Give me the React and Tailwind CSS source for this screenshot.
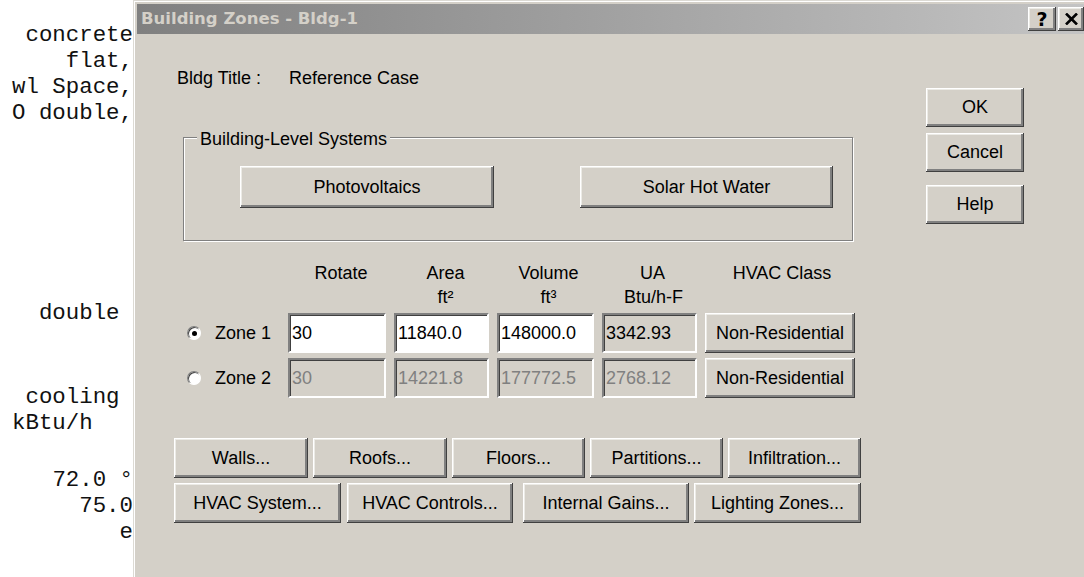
import React from 'react';

// Classic raised 3D button face
const Btn = ({ className = '', children }) => (
    <button
        type="button"
        className={`flex items-center justify-center bg-[#d4d0c8] text-black shadow-[inset_-1px_-1px_0_#404040,inset_1px_1px_0_#ffffff,inset_-3px_-3px_0_#808080,inset_2px_2px_0_#ecebe6] ${className}`}
    >
        {children}
    </button>
);

// Sunken edit box; disabled ones keep the dialog face colour
const Field = ({ value, white, dim }) => (
    <div
        className={`flex h-[40px] items-center border-2 border-t-[#808080] border-l-[#808080] border-r-white border-b-white pl-[2px] shadow-[inset_1px_1px_0_#404040] ${white ? 'bg-white' : 'bg-[#d4d0c8]'} ${dim ? 'text-[#808080]' : 'text-black'}`}
    >
        {value}
    </div>
);

const Radio = ({ checked }) => (
    <span className="flex h-[14px] w-[14px] items-center justify-center rounded-full border border-t-[#808080] border-l-[#808080] border-r-white border-b-white bg-white shadow-[inset_1px_1px_0_#404040]">
        {checked && <span className="h-[5px] w-[5px] rounded-full bg-black" />}
    </span>
);

const cols = 'grid grid-cols-[93px_98px_95px_97px_95px_150px] gap-x-[8px]';

const zones = [
    { name: 'Zone 1', rotate: '30', area: '11840.0', volume: '148000.0', ua: '3342.93', active: true },
    { name: 'Zone 2', rotate: '30', area: '14221.8', volume: '177772.5', ua: '2768.12', active: false },
];

export default function App() {
    return (
        <div className="flex h-[577px] w-[1084px] overflow-hidden bg-white font-['Liberation_Sans',Arial,sans-serif] text-[18px] text-black">
            {/* Report text behind the dialog */}
            <div className="w-[133px] shrink-0 overflow-hidden whitespace-pre text-right font-['Liberation_Mono','Courier_New',monospace] text-[22.4px] leading-[26px] text-[#111]">
                <div className="mt-[22px]">concrete</div>
                <div>flat,</div>
                <div>wl Space,</div>
                <div>O double,</div>
                <div className="mt-[174px]">double </div>
                <div className="mt-[58px]">cooling </div>
                <div>kBtu/h   </div>
                <div className="mt-[31px]">72.0 °</div>
                <div>75.0</div>
                <div>e</div>
            </div>

            {/* Dialog window */}
            <div className="flex flex-1 flex-col bg-[#d4d0c8] pl-[4px] pt-[4px] shadow-[inset_1px_1px_0_#dcdad4,inset_2px_2px_0_#ffffff]">
                <div className="flex h-[30px] items-center justify-between bg-linear-to-r from-[#808080] to-[#c4c4c4] pl-[4px]">
                    <span className="font-['DejaVu_Sans',sans-serif] text-[16.5px] font-bold text-[#d4d0c8]">
                        Building Zones - Bldg-1
                    </span>
                    <div className="flex gap-[2px]">
                        <Btn className="h-[24px] w-[28px] font-['DejaVu_Sans',sans-serif] text-[19px] font-bold">?</Btn>
                        <Btn className="h-[24px] w-[26px]">
                            <svg width="13" height="12" viewBox="0 0 13 12">
                                <path d="M1 0.5 L12 11.5 M12 0.5 L1 11.5" stroke="#000" strokeWidth="2.6" />
                            </svg>
                        </Btn>
                    </div>
                </div>

                <div className="flex">
                    <div className="w-[789px] shrink-0">
                        <div className="mt-[34px] flex pl-[40px] leading-[20px]">
                            <span className="w-[112px]">Bldg Title :</span>
                            <span>Reference Case</span>
                        </div>

                        {/* Building-Level Systems group */}
                        <div className="ml-[46px] mt-[49px] h-[104px] w-[670px] border border-[#808080] shadow-[1px_1px_0_#ffffff,inset_1px_1px_0_#ffffff]">
                            <div className="-mt-[9px] ml-[13px] w-fit bg-[#d4d0c8] px-[3px] leading-[20px]">
                                Building-Level Systems
                            </div>
                            <div className="ml-[56px] mt-[17px] flex">
                                <Btn className="h-[42px] w-[254px]">Photovoltaics</Btn>
                                <Btn className="ml-[86px] h-[42px] w-[253px]">Solar Hot Water</Btn>
                            </div>
                        </div>

                        {/* Zone table */}
                        <div className={`${cols} ml-[50px] mt-[20px] text-center leading-[24px]`}>
                            <div />
                            <div className="pl-[8px]">Rotate</div>
                            <div className="pl-[8px]">Area</div>
                            <div className="pl-[6px]">Volume</div>
                            <div className="pl-[6px]">UA</div>
                            <div className="pl-[4px]">HVAC Class</div>
                            <div />
                            <div />
                            <div className="pl-[8px]">ft²</div>
                            <div className="pl-[6px]">ft³</div>
                            <div className="pl-[8px]">Btu/h-F</div>
                            <div />
                        </div>

                        <div className="mt-[4px] flex flex-col gap-[5px]">
                            {zones.map((z) => (
                                <div key={z.name} className={`${cols} ml-[50px]`}>
                                    <div className="flex items-center gap-[14px]">
                                        <Radio checked={z.active} />
                                        <span>{z.name}</span>
                                    </div>
                                    <Field value={z.rotate} white={z.active} dim={!z.active} />
                                    <Field value={z.area} white={z.active} dim={!z.active} />
                                    <Field value={z.volume} white={z.active} dim={!z.active} />
                                    <Field value={z.ua} dim={!z.active} />
                                    <Btn className="h-[40px]">Non-Residential</Btn>
                                </div>
                            ))}
                        </div>

                        {/* Component buttons */}
                        <div className="ml-[37px] mt-[40px] flex gap-[5px]">
                            <Btn className="h-[40px] w-[134px]">Walls...</Btn>
                            <Btn className="h-[40px] w-[134px]">Roofs...</Btn>
                            <Btn className="h-[40px] w-[133px]">Floors...</Btn>
                            <Btn className="h-[40px] w-[133px]">Partitions...</Btn>
                            <Btn className="h-[40px] w-[133px]">Infiltration...</Btn>
                        </div>
                        <div className="ml-[37px] mt-[5px] flex">
                            <Btn className="h-[40px] w-[167px]">HVAC System...</Btn>
                            <Btn className="ml-[6px] h-[40px] w-[166px]">HVAC Controls...</Btn>
                            <Btn className="ml-[10px] h-[40px] w-[166px]">Internal Gains...</Btn>
                            <Btn className="ml-[5px] h-[40px] w-[167px]">Lighting Zones...</Btn>
                        </div>
                    </div>

                    <div className="flex w-[98px] flex-col pt-[54px]">
                        <Btn className="h-[39px]">OK</Btn>
                        <Btn className="mt-[6px] h-[39px]">Cancel</Btn>
                        <Btn className="mt-[13px] h-[39px]">Help</Btn>
                    </div>
                </div>
            </div>
        </div>
    );
}
